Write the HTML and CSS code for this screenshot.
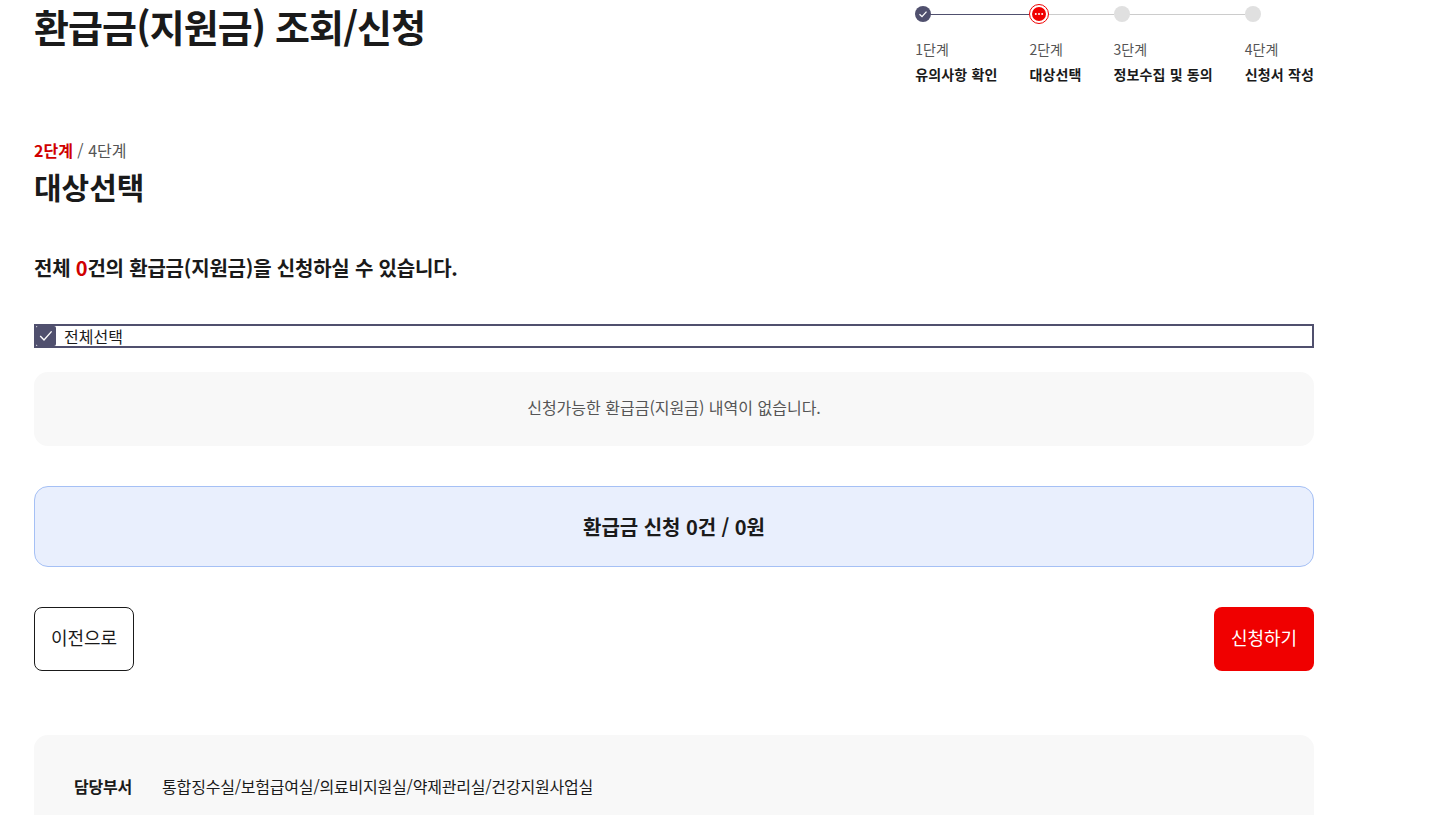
FILE: index.html
```html
<!DOCTYPE html>
<html lang="ko">
<head>
<meta charset="utf-8">
<title>환급금(지원금) 조회/신청</title>
<link rel="stylesheet" href="styles.css">
</head>
<body>
<main class="page">
  <header class="top">
    <h1 class="title">환급금(지원금) 조회/신청</h1>
    <ol class="steps">
      <li class="step done">
        <span class="dot"><svg width="10" height="10" viewBox="0 0 10 10"><path d="M1.5 5.2 4 7.6 8.5 2.6" fill="none" stroke="#fff" stroke-width="1.3"/></svg></span>
        <span class="num">1단계</span><strong class="name">유의사항 확인</strong>
      </li>
      <li class="step current">
        <span class="dot"><svg width="10" height="4" viewBox="0 0 10 4"><circle cx="1.8" cy="2" r="1" fill="#fff"/><circle cx="5" cy="2" r="1" fill="#fff"/><circle cx="8.2" cy="2" r="1" fill="#fff"/></svg></span>
        <span class="num">2단계</span><strong class="name">대상선택</strong>
      </li>
      <li class="step">
        <span class="dot"></span>
        <span class="num">3단계</span><strong class="name">정보수집 및 동의</strong>
      </li>
      <li class="step">
        <span class="dot"></span>
        <span class="num">4단계</span><strong class="name">신청서 작성</strong>
      </li>
    </ol>
  </header>

  <p class="stage"><b>2단계</b> / 4단계</p>
  <h2 class="sub">대상선택</h2>
  <p class="lead">전체 <em>0</em>건의 환급금(지원금)을 신청하실 수 있습니다.</p>

  <label class="all">
    <span class="box"><svg width="14" height="12" viewBox="0 0 14 12"><path d="M1.2 6 5 10 12.6 1.4" fill="none" stroke="#fff" stroke-width="1.4"/></svg></span>
    <span>전체선택</span>
  </label>

  <div class="empty">신청가능한 환급금(지원금) 내역이 없습니다.</div>
  <div class="sum">환급금 신청 0건 / 0원</div>

  <div class="actions">
    <button class="btn prev" type="button">이전으로</button>
    <button class="btn next" type="button">신청하기</button>
  </div>

  <section class="info">
    <strong>담당부서</strong>
    <span>통합징수실/보험급여실/의료비지원실/약제관리실/건강지원사업실</span>
  </section>
</main>
</body>
</html>
```
FILE: styles.css
```css
* { box-sizing: border-box; }
html, body { margin: 0; height: 815px; overflow: hidden; background: #fff; }
body { font-family: "Noto Sans CJK KR", "Noto Sans", sans-serif; color: #1a1a1a; }
.page { width: 1280px; margin-left: 34px; }
.top { display: flex; justify-content: space-between; align-items: flex-start; height: 96px; }
.title { margin: 0; font-size: 38px; line-height: 52px; font-weight: 700; letter-spacing: -0.9px; }
.steps { list-style: none; margin: 6px 0 0; padding: 0; display: flex; gap: 32px; }
.step { position: relative; display: flex; flex-direction: column; align-items: flex-start; }
.step::after { content: ""; position: absolute; left: 8px; right: -32px; top: 8px; height: 1px; background: #ccc; }
.step:last-child::after { display: none; }
.step.done::after { background: #50506e; }
.dot { position: relative; z-index: 1; width: 16px; height: 16px; border-radius: 50%; background: #e0e0e0; display: flex; align-items: center; justify-content: center; }
.done .dot { background: #50506e; }
.current .dot { width: 20px; height: 20px; margin: -2px 0; border: 1.5px solid #f00000; padding: 2px; background: linear-gradient(#f00000, #f00000) content-box, #fff; }
.num { margin-top: 16px; font-size: 14px; line-height: 22px; color: #555; }
.name { margin-top: 4px; font-size: 14px; line-height: 21px; font-weight: 700; white-space: nowrap; letter-spacing: 0.14px; }
.stage { margin: 42px 0 0; font-size: 16px; line-height: 24px; color: #555; }
.stage b { color: #d00000; }
.sub { margin: 2px 0 0; font-size: 30px; line-height: 44px; font-weight: 700; }
.lead { margin: 45px 0 0; font-size: 20px; line-height: 30px; font-weight: 700; letter-spacing: -0.2px; }
.lead em { font-style: normal; color: #d00000; }
.all { display: flex; align-items: center; gap: 8px; height: 24px; margin-top: 41px; border: 2px solid #50506e; font-size: 16px; line-height: 20px; }
.box { width: 20px; height: 20px; border-radius: 2px; background: #50506e; display: flex; align-items: center; justify-content: center; }
.empty { margin-top: 24px; height: 74px; padding-bottom: 4px; background: #f8f8f8; border-radius: 14px; display: flex; align-items: center; justify-content: center; font-size: 16px; color: #555; }
.sum { margin-top: 40px; height: 81px; background: #e9effd; border: 1px solid #a5c0f5; border-radius: 14px; display: flex; align-items: center; justify-content: center; font-size: 20px; font-weight: 700; letter-spacing: -0.05px; }
.actions { display: flex; justify-content: space-between; margin-top: 40px; }
.btn { width: 100px; height: 64px; border-radius: 8px; font: inherit; font-size: 18px; padding: 0 0 4px; }
.prev { background: #fff; border: 1px solid #1a1a1a; color: #1a1a1a; }
.next { background: #f00000; border: 0; color: #fff; }
.info { margin-top: 64px; height: 120px; background: #f8f8f8; border-radius: 14px; padding: 37px 40px; display: flex; gap: 30px; font-size: 16px; line-height: 28px; letter-spacing: -0.2px; }
```
